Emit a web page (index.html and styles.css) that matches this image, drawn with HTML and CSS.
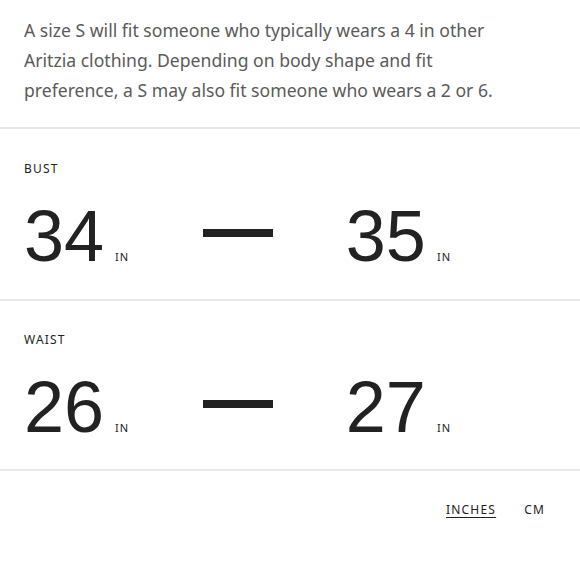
FILE: index.html
```html
<!DOCTYPE html>
<html lang="en">
<head>
<meta charset="utf-8">
<title>Size guide</title>
<link rel="stylesheet" href="styles.css">
</head>
<body>
<div class="page">
  <div class="intro-wrap">
    <p class="intro">A size S will fit someone who typically wears a 4 in other Aritzia clothing. Depending on body shape and fit preference, a S may also fit someone who wears a 2 or 6.</p>
  </div>

  <section class="measure">
    <h3 class="label">BUST</h3>
    <div class="range">
      <div class="val"><span class="num">34</span><span class="unit">IN</span></div>
      <span class="dash"></span>
      <div class="val"><span class="num">35</span><span class="unit">IN</span></div>
    </div>
  </section>

  <section class="measure">
    <h3 class="label">WAIST</h3>
    <div class="range">
      <div class="val"><span class="num">26</span><span class="unit">IN</span></div>
      <span class="dash"></span>
      <div class="val"><span class="num">27</span><span class="unit">IN</span></div>
    </div>
  </section>

  <div class="units">
    <a class="unit-opt active">INCHES</a>
    <a class="unit-opt">CM</a>
  </div>
</div>
</body>
</html>
```

FILE: styles.css
```css
html, body {
  margin: 0;
  padding: 0;
  background: #fff;
}
body {
  font-family: "Noto Sans", Lato, sans-serif;
  color: #222;
}
.page {
  width: 580px;
}
.intro-wrap {
  padding: 15px 24px 22px;
  border-bottom: 2px solid #e8e8e8;
}
.intro {
  margin: 0;
  max-width: 505px;
  font-size: 17.6px;
  line-height: 30px;
  color: #5a5a5a;
}
.measure {
  padding: 32px 24px 27px;
  border-bottom: 2px solid #e8e8e8;
}
.measure + .measure {
  padding-bottom: 26px;
}
.label {
  margin: 0;
  font-size: 12px;
  font-weight: 400;
  letter-spacing: 1.2px;
  line-height: 16px;
  color: #222;
}
.measure + .measure .label {
  margin-top: -1px;
  margin-bottom: 1px;
}
.range {
  margin-top: 23px;
  width: 427px;
  display: flex;
  justify-content: space-between;
  align-items: baseline;
}
.val {
  display: flex;
  align-items: baseline;
}
.num {
  font-family: "Liberation Sans", Arial, sans-serif;
  font-size: 72px;
  line-height: 72px;
  color: #222;
}
.unit {
  margin-left: 11px;
  font-size: 11px;
  letter-spacing: 1px;
  color: #222;
}
.dash {
  align-self: center;
  width: 70px;
  height: 8px;
  margin-bottom: 6px;
  background: #222;
}
.units {
  display: flex;
  justify-content: flex-end;
  gap: 28px;
  padding: 31px 35px 0 0;
}
.unit-opt {
  font-size: 12px;
  letter-spacing: 1.2px;
  line-height: 16px;
  color: #222;
}
.unit-opt.active {
  text-decoration: underline;
  text-underline-offset: 3px;
}
```
